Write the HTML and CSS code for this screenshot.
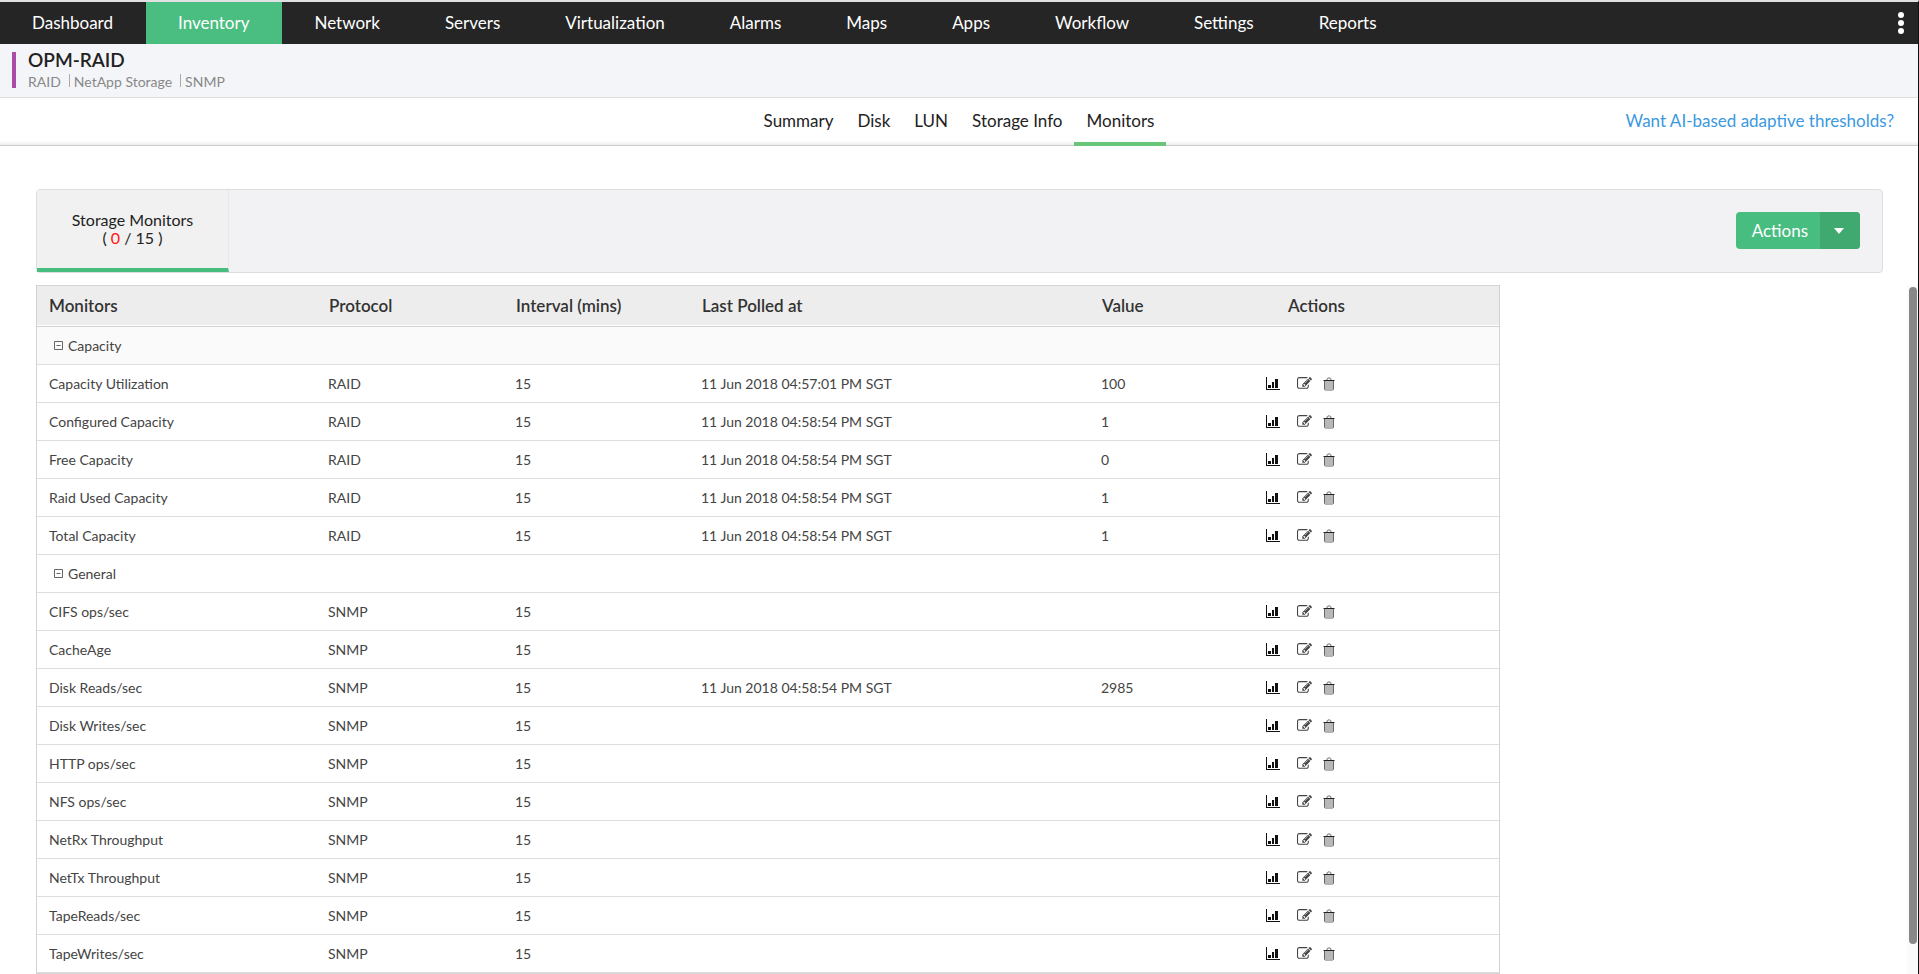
FILE: index.html
```html
<!DOCTYPE html>
<html lang="en">
<head>
<meta charset="utf-8">
<meta name="viewport" content="width=device-width, initial-scale=1">
<title>OPM-RAID - Monitors</title>
<link rel="stylesheet" href="styles.css">
</head>
<body>
<svg class="sprite" aria-hidden="true">
  <symbol id="chart" viewBox="0 0 14 14"><path d="M0 0h1v12H14V13H0z"/><path d="M2 8h3v3H2zM6 5h2v6H6zM9 2h3v9H9z"/></symbol>
  <symbol id="edit" viewBox="0 0 1792 1792"><path d="M888 1184l116-116-152-152-116 116v56h96v96h56zm440-720q-16-16-33 1l-350 350q-17 17-1 33t33-1l350-350q17-17 1-33zm80 594v190q0 119-84.500 203.500t-203.500 84.500h-832q-119 0-203.500-84.500t-84.500-203.500v-832q0-119 84.500-203.500t203.500-84.500h832q63 0 117 25 15 7 18 23 3 17-9 29l-49 49q-14 14-32 8-23-6-45-6h-832q-66 0-113 47t-47 113v832q0 66 47 113t113 47h832q66 0 113-47t47-113v-126q0-13 9-22l64-64q15-15 35-7t20 29zm-96-738l288 288-672 672h-288v-288zm444 132l-92 92-288-288 92-92q28-28 68-28t68 28l152 152q28 28 28 68t-28 68z"/></symbol>
  <symbol id="trash" viewBox="0 0 12 14"><path d="M2 4h8v8H2z" fill="#b8b8b8"/><path d="M1.500 3.500V12q0 1 1 1h7q1 0 1-1V3.500M3.800 3l.7-1.600q.2-.4.6-.4h1.800q.4 0 .6.4L8.200 3" fill="none" stroke="#666"/><path d="M.5 3h11v1H.5z" fill="#222"/></symbol>
  <symbol id="minus" viewBox="0 0 9 9"><path d="M.5.5h8v8h-8z" fill="none" stroke="#666"/><path d="M2.500 4h4v1h-4z" fill="#666"/></symbol>
</svg>

<nav class="topnav">
  <a href="#">Dashboard</a>
  <a href="#" class="active">Inventory</a>
  <a href="#">Network</a>
  <a href="#">Servers</a>
  <a href="#">Virtualization</a>
  <a href="#">Alarms</a>
  <a href="#">Maps</a>
  <a href="#">Apps</a>
  <a href="#">Workflow</a>
  <a href="#">Settings</a>
  <a href="#">Reports</a>
  <button class="more" type="button" aria-label="More options"><svg viewBox="0 0 6 24"><circle cx="3" cy="4" r="3"/><circle cx="3" cy="12" r="3"/><circle cx="3" cy="20" r="3"/></svg></button>
</nav>

<header class="device">
  <div class="device-info">
    <h1>OPM-RAID</h1>
    <ul class="meta"><li>RAID</li><li>NetApp Storage</li><li>SNMP</li></ul>
  </div>
</header>

<div class="tabbar">
  <nav class="tabs">
    <a href="#">Summary</a>
    <a href="#">Disk</a>
    <a href="#">LUN</a>
    <a href="#">Storage Info</a>
    <a href="#" class="active">Monitors</a>
  </nav>
  <a class="hint" href="#">Want AI-based adaptive thresholds?</a>
</div>

<section class="panel">
  <a class="category" href="#"><span>Storage Monitors</span><span>( <em>0</em> / 15 )</span></a>
  <div class="split">
    <button type="button">Actions</button>
    <button class="caret" type="button" aria-label="Open actions menu"><svg viewBox="0 0 10 6"><path d="M0 0h10L5 6z"/></svg></button>
  </div>
</section>

<main class="list">
  <table class="monitors">
    <colgroup><col class="c-name"><col class="c-proto"><col class="c-int"><col class="c-time"><col class="c-value"><col></colgroup>
    <thead>
      <tr><th>Monitors</th><th>Protocol</th><th>Interval (mins)</th><th>Last Polled at</th><th>Value</th><th class="act">Actions</th></tr>
    </thead>
    <tbody>
      <tr class="group first"><td colspan="6"><button type="button"><svg><use href="#minus"/></svg>Capacity</button></td></tr>
      <tr><td>Capacity Utilization</td><td>RAID</td><td>15</td><td>11 Jun 2018 04:57:01 PM SGT</td><td>100</td><td><div class="tools"><button type="button" aria-label="Graph"><svg class="chart"><use href="#chart"/></svg></button><button type="button" aria-label="Edit"><svg class="edit"><use href="#edit"/></svg></button><button type="button" aria-label="Delete"><svg class="trash"><use href="#trash"/></svg></button></div></td></tr>
      <tr><td>Configured Capacity</td><td>RAID</td><td>15</td><td>11 Jun 2018 04:58:54 PM SGT</td><td>1</td><td><div class="tools"><button type="button" aria-label="Graph"><svg class="chart"><use href="#chart"/></svg></button><button type="button" aria-label="Edit"><svg class="edit"><use href="#edit"/></svg></button><button type="button" aria-label="Delete"><svg class="trash"><use href="#trash"/></svg></button></div></td></tr>
      <tr><td>Free Capacity</td><td>RAID</td><td>15</td><td>11 Jun 2018 04:58:54 PM SGT</td><td>0</td><td><div class="tools"><button type="button" aria-label="Graph"><svg class="chart"><use href="#chart"/></svg></button><button type="button" aria-label="Edit"><svg class="edit"><use href="#edit"/></svg></button><button type="button" aria-label="Delete"><svg class="trash"><use href="#trash"/></svg></button></div></td></tr>
      <tr><td>Raid Used Capacity</td><td>RAID</td><td>15</td><td>11 Jun 2018 04:58:54 PM SGT</td><td>1</td><td><div class="tools"><button type="button" aria-label="Graph"><svg class="chart"><use href="#chart"/></svg></button><button type="button" aria-label="Edit"><svg class="edit"><use href="#edit"/></svg></button><button type="button" aria-label="Delete"><svg class="trash"><use href="#trash"/></svg></button></div></td></tr>
      <tr><td>Total Capacity</td><td>RAID</td><td>15</td><td>11 Jun 2018 04:58:54 PM SGT</td><td>1</td><td><div class="tools"><button type="button" aria-label="Graph"><svg class="chart"><use href="#chart"/></svg></button><button type="button" aria-label="Edit"><svg class="edit"><use href="#edit"/></svg></button><button type="button" aria-label="Delete"><svg class="trash"><use href="#trash"/></svg></button></div></td></tr>
      <tr class="group"><td colspan="6"><button type="button"><svg><use href="#minus"/></svg>General</button></td></tr>
      <tr><td>CIFS ops/sec</td><td>SNMP</td><td>15</td><td></td><td></td><td><div class="tools"><button type="button" aria-label="Graph"><svg class="chart"><use href="#chart"/></svg></button><button type="button" aria-label="Edit"><svg class="edit"><use href="#edit"/></svg></button><button type="button" aria-label="Delete"><svg class="trash"><use href="#trash"/></svg></button></div></td></tr>
      <tr><td>CacheAge</td><td>SNMP</td><td>15</td><td></td><td></td><td><div class="tools"><button type="button" aria-label="Graph"><svg class="chart"><use href="#chart"/></svg></button><button type="button" aria-label="Edit"><svg class="edit"><use href="#edit"/></svg></button><button type="button" aria-label="Delete"><svg class="trash"><use href="#trash"/></svg></button></div></td></tr>
      <tr><td>Disk Reads/sec</td><td>SNMP</td><td>15</td><td>11 Jun 2018 04:58:54 PM SGT</td><td>2985</td><td><div class="tools"><button type="button" aria-label="Graph"><svg class="chart"><use href="#chart"/></svg></button><button type="button" aria-label="Edit"><svg class="edit"><use href="#edit"/></svg></button><button type="button" aria-label="Delete"><svg class="trash"><use href="#trash"/></svg></button></div></td></tr>
      <tr><td>Disk Writes/sec</td><td>SNMP</td><td>15</td><td></td><td></td><td><div class="tools"><button type="button" aria-label="Graph"><svg class="chart"><use href="#chart"/></svg></button><button type="button" aria-label="Edit"><svg class="edit"><use href="#edit"/></svg></button><button type="button" aria-label="Delete"><svg class="trash"><use href="#trash"/></svg></button></div></td></tr>
      <tr><td>HTTP ops/sec</td><td>SNMP</td><td>15</td><td></td><td></td><td><div class="tools"><button type="button" aria-label="Graph"><svg class="chart"><use href="#chart"/></svg></button><button type="button" aria-label="Edit"><svg class="edit"><use href="#edit"/></svg></button><button type="button" aria-label="Delete"><svg class="trash"><use href="#trash"/></svg></button></div></td></tr>
      <tr><td>NFS ops/sec</td><td>SNMP</td><td>15</td><td></td><td></td><td><div class="tools"><button type="button" aria-label="Graph"><svg class="chart"><use href="#chart"/></svg></button><button type="button" aria-label="Edit"><svg class="edit"><use href="#edit"/></svg></button><button type="button" aria-label="Delete"><svg class="trash"><use href="#trash"/></svg></button></div></td></tr>
      <tr><td>NetRx Throughput</td><td>SNMP</td><td>15</td><td></td><td></td><td><div class="tools"><button type="button" aria-label="Graph"><svg class="chart"><use href="#chart"/></svg></button><button type="button" aria-label="Edit"><svg class="edit"><use href="#edit"/></svg></button><button type="button" aria-label="Delete"><svg class="trash"><use href="#trash"/></svg></button></div></td></tr>
      <tr><td>NetTx Throughput</td><td>SNMP</td><td>15</td><td></td><td></td><td><div class="tools"><button type="button" aria-label="Graph"><svg class="chart"><use href="#chart"/></svg></button><button type="button" aria-label="Edit"><svg class="edit"><use href="#edit"/></svg></button><button type="button" aria-label="Delete"><svg class="trash"><use href="#trash"/></svg></button></div></td></tr>
      <tr><td>TapeReads/sec</td><td>SNMP</td><td>15</td><td></td><td></td><td><div class="tools"><button type="button" aria-label="Graph"><svg class="chart"><use href="#chart"/></svg></button><button type="button" aria-label="Edit"><svg class="edit"><use href="#edit"/></svg></button><button type="button" aria-label="Delete"><svg class="trash"><use href="#trash"/></svg></button></div></td></tr>
      <tr><td>TapeWrites/sec</td><td>SNMP</td><td>15</td><td></td><td></td><td><div class="tools"><button type="button" aria-label="Graph"><svg class="chart"><use href="#chart"/></svg></button><button type="button" aria-label="Edit"><svg class="edit"><use href="#edit"/></svg></button><button type="button" aria-label="Delete"><svg class="trash"><use href="#trash"/></svg></button></div></td></tr>
    </tbody>
  </table>
  <div class="scrollbar" aria-hidden="true"><div class="thumb"></div></div>
</main>
</body>
</html>
```

FILE: styles.css
```css
* { box-sizing: border-box; }

body {
  margin: 0;
  height: 100vh;
  display: flex;
  flex-direction: column;
  overflow: hidden;
  border-top: 2px solid #dfe1e3;
  border-right: 1px solid #111;
  background: #fff;
  color: #222;
  font-family: Lato, "Open Sans", sans-serif;
  font-size: 14px;
}

a { color: inherit; text-decoration: none; }
button { border: 0; padding: 0; background: none; color: inherit; font: inherit; cursor: pointer; }
svg { display: block; }
.sprite { display: none; }

.topnav {
  flex: none;
  display: flex;
  height: 42px;
  background: #252525;
  color: #fff;
  font-size: 17px;
  line-height: 41px;
}
.topnav a { padding: 0 33px 0 32px; }
.topnav .active { background: #4abd80; }
.more { margin-left: auto; padding: 0 14px; }
.more svg { width: 6px; height: 24px; fill: #fff; }

.device {
  flex: none;
  height: 54px;
  padding: 8px 12px 0;
  border-bottom: 1px solid #dfdfdf;
  background: #f4f5f8;
}
.device-info {
  height: 36px;
  padding-left: 12px;
  border-left: 4px solid #a94caa;
}
.device h1 { margin: 0; font-size: 19px; font-weight: 600; line-height: 16px; }
.meta { display: flex; margin: 0; padding: 0; list-style: none; color: #888; line-height: 28px; }
.meta li + li { margin-left: 8px; padding-left: 5px; background: linear-gradient(#aaa, #aaa) 0 6px / 1px 13px no-repeat; }

.tabbar {
  flex: none;
  display: grid;
  grid-template-columns: 1fr auto 1fr;
  height: 48px;
  border-bottom: 1px solid #ccc;
  box-shadow: inset 0 -4px 4px -3px #e4e4e4;
  font-size: 17px;
  line-height: 46px;
}
.tabs { grid-column: 2; display: flex; }
.tabs a { height: 48px; padding: 0 12px; }
.tabs .active { border-bottom: 4px solid #6ac47a; }
.hint { justify-self: end; padding-right: 24px; color: #3b99e0; }

.panel {
  flex: none;
  display: flex;
  align-items: center;
  justify-content: space-between;
  height: 84px;
  margin: 43px 35px 12px 36px;
  padding-right: 22px;
  border: 1px solid #ddd;
  border-radius: 4px;
  background: #f2f2f4;
}
.category {
  display: flex;
  flex-direction: column;
  justify-content: center;
  align-items: center;
  align-self: stretch;
  width: 192px;
  border-right: 1px solid #e8e8e8;
  border-bottom: 4px solid #48bd80;
  background: #f1f1f1;
  font-size: 16px;
  line-height: 18px;
}
.category em { color: #f11; font-style: normal; }

.split {
  display: flex;
  height: 37px;
  margin-bottom: 2px;
  overflow: hidden;
  border-radius: 4px;
  background: #48bd80;
  color: #fff;
  font-size: 17px;
}
.split button { padding: 0 12px 0 16px; }
.split .caret { display: flex; align-items: center; padding: 2px 16px 0 14px; background: #3fa96f; }
.caret svg { width: 10px; height: 6px; fill: #fff; }

.list {
  flex: 1;
  min-height: 0;
  display: flex;
  justify-content: space-between;
  align-items: flex-start;
  padding-left: 36px;
}
.monitors {
  width: 77.8%;
  border: 1px solid #d3d3d3;
  border-collapse: separate;
  border-spacing: 0;
  table-layout: fixed;
  color: #444;
}
.c-name { width: 279px; }
.c-proto { width: 187px; }
.c-int { width: 186px; }
.c-time { width: 400px; }
.c-value { width: 165px; }
.monitors th {
  height: 41px;
  padding: 0 0 1px 13px;
  border-bottom: 1px solid #d0d0d0;
  background: #ededed;
  box-shadow: inset 0 -1px #fff;
  color: #333;
  font-size: 17px;
  font-weight: 600;
  text-align: left;
}
.monitors th:first-child { padding-left: 12px; }
.monitors .act { padding-left: 34px; }
.monitors td { height: 38px; padding: 0 0 0 12px; border-bottom: 1px solid #dedede; }
.monitors .group td { padding-left: 17px; }
.first td { background: #fafafa; }
.group button { display: flex; align-items: center; gap: 5px; }
.group svg { width: 9px; height: 9px; }

.tools { display: flex; align-items: center; }
.tools .chart { width: 14px; height: 14px; margin-right: 17px; fill: #111; }
.tools .edit { width: 15px; height: 15px; margin-right: 11px; fill: #444; }
.tools .trash { width: 12px; height: 14px; }

.scrollbar { width: 11px; height: 100%; padding: 2px 1px 0 2px; background: #fafafa; }
.thumb { width: 8px; height: 95.6%; border-radius: 4px; background: #888; }
```
